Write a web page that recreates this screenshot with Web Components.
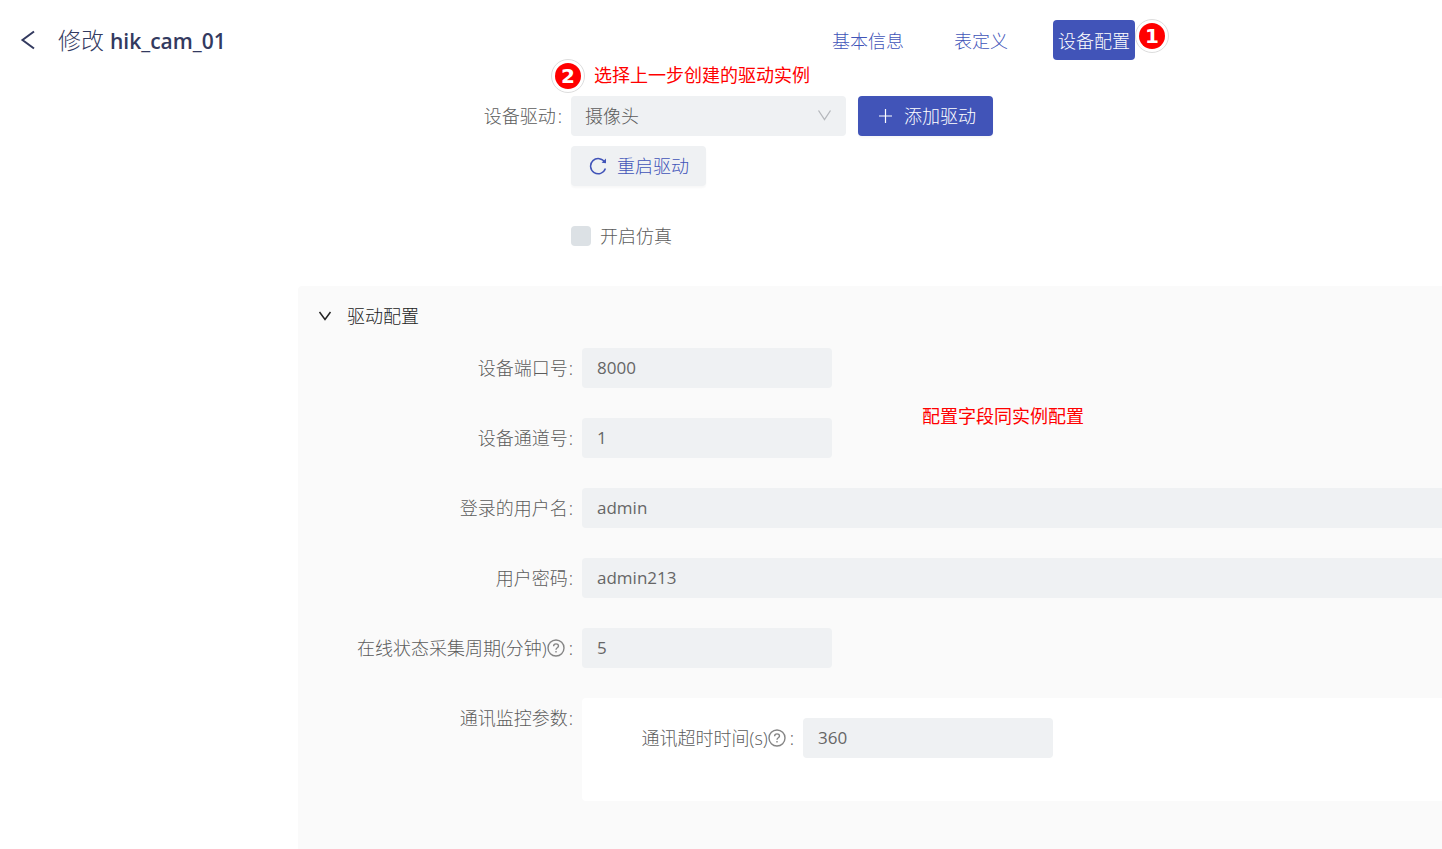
<!DOCTYPE html>
<html lang="zh-CN">
<head>
<meta charset="utf-8">
<meta name="viewport" content="width=device-width, initial-scale=1">
<title>修改 hik_cam_01</title>
<style>
  html, body { margin: 0; }
  body {
    --primary: #4154b8;
    --field: #eff1f3;
    --text: #5c5c5c;
    background: #fff;
    color: var(--text);
    font: 300 18px/40px "Open Sans", "Noto Sans CJK SC", sans-serif;
  }
</style>
</head>
<body>
<device-page></device-page>

<script>
const define = (name, html, setup) => {
  const template = document.createElement('template');
  template.innerHTML = html;
  customElements.define(name, class extends HTMLElement {
    constructor() {
      super();
      this.attachShadow({ mode: 'open' }).append(template.content.cloneNode(true));
    }
    connectedCallback() {
      if (setup) setup(this, this.shadowRoot);
    }
  });
};

/* Numbered red marker */
define('step-badge', `
  <style>
    :host {
      box-sizing: border-box; width: 34px; height: 34px; border-radius: 50%;
      border: 1px solid #ddd; background: #fff; padding: 3px; display: block;
    }
    span {
      display: block; height: 26px; border-radius: 50%; background: #f00; color: #fff;
      font: 700 20px/26px "DejaVu Sans", sans-serif; text-align: center;
    }
  </style>
  <span><slot></slot></span>`);

/* Red annotation text */
define('note-text', `
  <style>
    :host { display: block; padding-bottom: 4px; color: #f00; font: 400 18px/24px "Noto Sans CJK SC", sans-serif; white-space: nowrap; }
  </style>
  <slot></slot>`);

define('nav-tab', `
  <style>
    :host { display: block; }
    button {
      display: block; height: 40px; padding: 2px 5px 0; border: 0; border-radius: 4px;
      background: none; color: var(--primary); font: inherit; line-height: 38px; white-space: nowrap;
    }
    :host([active]) button { background: var(--primary); color: #fff; }
  </style>
  <button type="button"><slot></slot></button>`);

define('page-header', `
  <style>
    :host { display: flex; align-items: center; padding: 20px 307px 0 20px; }
    .back { display: flex; padding: 0; border: 0; background: none; margin-right: 20px; }
    h1 { margin: 0; font-size: 23px; font-weight: 300; line-height: 36px; color: #333a5f; white-space: nowrap; }
    b { font-size: 21px; font-weight: 600; }
    nav { display: flex; gap: 40px; margin-left: auto; }
    .current { position: relative; }
    step-badge { position: absolute; left: 100%; top: -1px; }
  </style>
  <button class="back" type="button" aria-label="返回">
    <svg width="18" height="20" viewBox="0 0 18 20" fill="none" stroke="#333a5f" stroke-width="2"><path d="M14 1.5 2.5 10 14 18.500"/></svg>
  </button>
  <h1>修改 <b>hik_cam_01</b></h1>
  <nav>
    <nav-tab>基本信息</nav-tab>
    <nav-tab>表定义</nav-tab>
    <div class="current"><nav-tab active>设备配置</nav-tab><step-badge>1</step-badge></div>
  </nav>`);

define('icon-button', `
  <style>
    :host { display: block; }
    button {
      display: flex; align-items: center; gap: 9px; height: 40px; padding: 0 17px 0 18px; border: 0; border-radius: 4px;
      background: var(--field); color: var(--primary); font: inherit; line-height: 40px; white-space: nowrap;
      box-shadow: 0 2px 2px rgba(0, 0, 0, .03);
    }
    :host([primary]) button { background: var(--primary); color: #fff; }
  </style>
  <button type="button"><slot name="icon"></slot><slot></slot></button>`);

define('driver-form', `
  <style>
    :host { display: grid; grid-template-columns: 562px 1fr; column-gap: 9px; padding-top: 36px; }
    .label { text-align: right; }
    .label::after { content: ":"; margin-left: 2px; }
    .controls { display: flex; flex-direction: column; align-items: flex-start; gap: 10px; }
    .line { display: flex; gap: 12px; }
    .select { position: relative; width: 275px; }
    select {
      appearance: none; display: block; box-sizing: border-box; width: 100%; height: 40px; padding: 0 14px;
      border: 0; border-radius: 4px; background: var(--field); color: var(--text); font: inherit;
    }
    .select svg { position: absolute; right: 14px; top: 13px; pointer-events: none; }
    .note { position: absolute; left: -20px; bottom: 100%; display: flex; align-items: center; gap: 9px; margin-bottom: 3px; }
    .check { display: flex; align-items: center; gap: 9px; padding-top: 20px; }
    input { appearance: none; width: 20px; height: 20px; margin: 0; border-radius: 4px; background: #dce1e5; }
  </style>
  <label class="label" for="driver">设备驱动</label>
  <div class="controls">
    <div class="line">
      <div class="select">
        <select id="driver"><option>摄像头</option></select>
        <svg width="15" height="12" viewBox="0 0 15 12" fill="none" stroke="#b5b8bc" stroke-width="1.300"><path d="M1.500 1.500 7.500 10.500 13.500 1.500"/></svg>
        <div class="note"><step-badge>2</step-badge><note-text>选择上一步创建的驱动实例</note-text></div>
      </div>
      <icon-button primary>
        <svg slot="icon" width="19" height="16" viewBox="0 0 19 16" fill="none" stroke="#fff" stroke-width="1.200"><path d="M9.500 1v14M3 8h13"/></svg>
        添加驱动
      </icon-button>
    </div>
    <icon-button>
      <svg slot="icon" width="19" height="18" viewBox="0 0 19 18" fill="none" stroke="#4154b8" stroke-width="1.500"><path d="M15.800 5.400A7.600 7.600 0 1 0 16.400 11.600"/><path d="M17 1.600v4.600l-4.400-.4z" fill="#4154b8" stroke="none"/></svg>
      重启驱动
    </icon-button>
    <label class="check"><input type="checkbox">开启仿真</label>
  </div>`);

/* Labelled text box; "help" adds a question mark, "wide" fills the row */
define('form-field', `
  <style>
    :host { display: grid; grid-template-columns: var(--label-width, 275px) 1fr; column-gap: 9px; }
    label { display: flex; justify-content: flex-end; align-items: center; white-space: nowrap; }
    label::after { content: ":"; margin-left: 1px; }
    svg { display: none; margin: 0 3px 0 0; }
    :host([help]) svg { display: block; }
    input {
      box-sizing: border-box; width: 250px; height: 40px; padding: 0 15px; border: 0; border-radius: 4px;
      background: var(--field); color: #666; font: inherit; font-size: 17px; font-weight: 400;
    }
    :host([wide]) input { width: 100%; border-radius: 4px 0 0 4px; }
  </style>
  <label for="box"><slot></slot><svg width="18" height="18" viewBox="0 0 18 18" fill="none" stroke="#858585" stroke-width="1.400"><circle cx="9" cy="9" r="8"/><path d="M6.600 7.200C6.600 4 11.500 4.200 11.500 7c0 1.900-2.500 1.700-2.500 3.700"/><path d="M9 12v1.600"/></svg></label>
  <input id="box" type="text">`,
  (host, root) => { root.querySelector('input').value = host.getAttribute('value'); });

define('config-panel', `
  <style>
    :host { display: block; position: relative; background: #fafafa; border-radius: 4px 0 0 0; }
    button {
      display: flex; align-items: center; gap: 15px; height: 40px; margin: 0; padding: 0 20px;
      border: 0; background: none; color: #222; font: inherit; line-height: 40px;
    }
    .fields { display: flex; flex-direction: column; gap: 30px; padding: 12px 0 48px; }
    .head { padding-top: 10px; }
    .group { display: grid; grid-template-columns: 275px 1fr; column-gap: 9px; }
    .group > span { text-align: right; }
    .group > span::after { content: ":"; margin-left: 1px; }
    .inner { padding: 20px 0 43px; background: #fff; border-radius: 4px 0 0 4px; --label-width: 212px; }
    note-text { position: absolute; left: 624px; top: 117px; }
  </style>
  <div class="head">
    <button type="button" aria-expanded="true">
      <svg width="14" height="10" viewBox="0 0 14 10" fill="none" stroke="#222" stroke-width="1.500"><path d="M1.500 1 7 8.500 12.500 1"/></svg>
      驱动配置
    </button>
  </div>
  <div class="fields">
    <form-field value="8000">设备端口号</form-field>
    <form-field value="1">设备通道号</form-field>
    <form-field wide value="admin">登录的用户名</form-field>
    <form-field wide value="admin213">用户密码</form-field>
    <form-field help value="5">在线状态采集周期(分钟)</form-field>
    <div class="group">
      <span>通讯监控参数</span>
      <div class="inner"><form-field help value="360">通讯超时时间(s)</form-field></div>
    </div>
  </div>
  <note-text>配置字段同实例配置</note-text>`);

define('device-page', `
  <style>
    :host { display: flex; flex-direction: column; min-height: 100vh; }
    config-panel { flex: 1; margin: 30px 0 0 298px; }
  </style>
  <page-header></page-header>
  <driver-form></driver-form>
  <config-panel></config-panel>`);
</script>
</body>
</html>
